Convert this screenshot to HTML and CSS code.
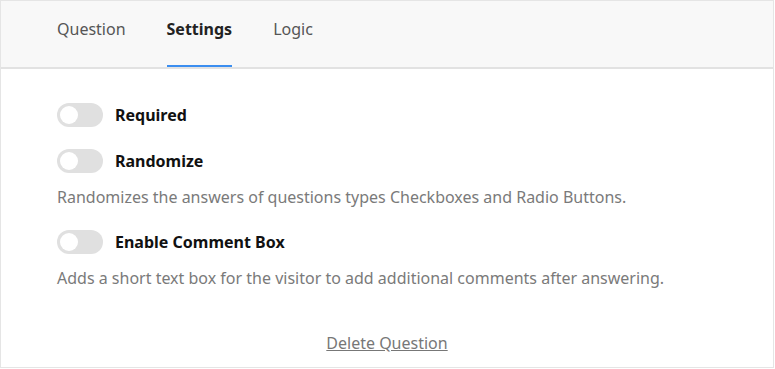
FILE: index.html
```html
<!DOCTYPE html>
<html lang="en">
<head>
  <meta charset="UTF-8" />
  <title>Question Settings</title>
  <link rel="stylesheet" href="styles.css">
</head>
<body>
  <div class="panel">
    <nav class="tabs">
      <a class="tab">Question</a>
      <a class="tab active">Settings</a>
      <a class="tab">Logic</a>
    </nav>

    <div class="settings">
      <!-- Required -->
      <div class="option">
        <span class="toggle"><span class="knob"></span></span>
        <span class="option-label">Required</span>
      </div>

      <!-- Randomize -->
      <div class="option">
        <span class="toggle"><span class="knob"></span></span>
        <span class="option-label">Randomize</span>
      </div>
      <p class="help">Randomizes the answers of questions types Checkboxes and Radio Buttons.</p>

      <!-- Comment box -->
      <div class="option">
        <span class="toggle"><span class="knob"></span></span>
        <span class="option-label">Enable Comment Box</span>
      </div>
      <p class="help">Adds a short text box for the visitor to add additional comments after answering.</p>

      <div class="delete-row">
        <a class="delete">Delete Question</a>
      </div>
    </div>
  </div>
</body>
</html>
```

FILE: styles.css
```css
* {
  margin: 0;
  padding: 0;
  box-sizing: border-box;
}

body {
  font-family: 'Noto Sans', 'Open Sans', sans-serif;
  background: #fff;
  color: #222;
}

.panel {
  width: 774px;
  height: 368px;
  border: 1px solid #e5e5e5;
  background: #fff;
}

.tabs {
  display: flex;
  gap: 41px;
  height: 68px;
  padding: 0 0 0 56px;
  background: #f8f8f8;
  border-bottom: 2px solid #e2e2e2;
}

.tab {
  display: flex;
  align-items: center;
  height: 66px;
  padding-bottom: 8px;
  font-size: 16px;
  color: #555;
  border-bottom: 2px solid transparent;
}

.tab.active {
  font-weight: 700;
  color: #222;
  border-bottom-color: #3b8ef0;
}

.settings {
  padding: 34px 56px 0;
}

.option {
  display: flex;
  align-items: center;
  gap: 12px;
  height: 24px;
  margin-bottom: 22px;
}

.toggle {
  position: relative;
  width: 46px;
  height: 24px;
  border-radius: 12px;
  background: #e0e0e0;
}

.knob {
  position: absolute;
  left: 3px;
  top: 3px;
  width: 18px;
  height: 18px;
  border-radius: 50%;
  background: #fff;
}

.option-label {
  font-size: 16px;
  font-weight: 700;
  color: #111;
}

.help {
  font-size: 16px;
  line-height: 22px;
  color: #7a7a7a;
  margin: -9px 0 22px;
}

.delete-row {
  text-align: center;
  margin-top: 43px;
  line-height: 22px;
}

.delete {
  font-size: 16px;
  color: #777;
  text-decoration: underline;
}
```
